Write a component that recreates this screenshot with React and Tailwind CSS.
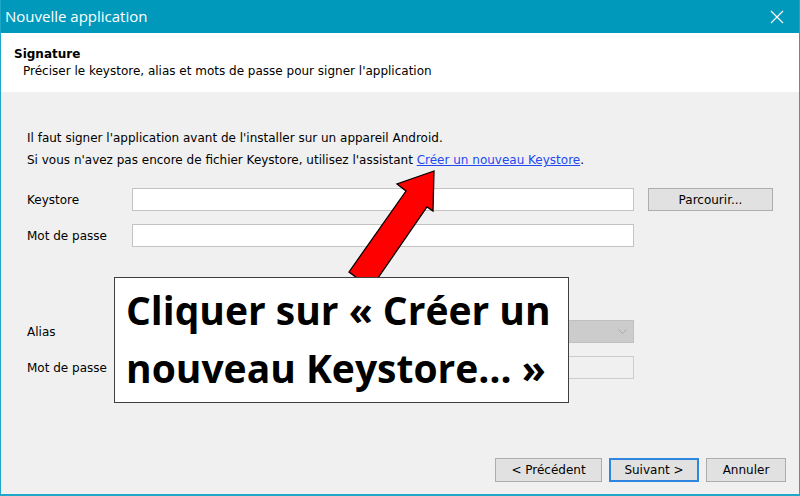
import React from "react";

const ui = { fontFamily: '"DejaVu Sans", Verdana, sans-serif' };

const Field = ({ label, children }) => (
  <div className="flex items-center h-[23px]">
    <span className="w-[105px] text-[12px] text-black">{label}</span>
    {children}
  </div>
);

const Button = ({ children, primary, width }) => (
  <button
    className={
      "h-[24px] bg-[#e1e1e1] text-[12px] text-black flex items-center justify-center " +
      (primary ? "border-2 border-[#2f86de]" : "border border-[#adadad]")
    }
    style={{ width }}
  >
    {children}
  </button>
);

const App = () => {
  return (
    <div
      className="relative w-[800px] h-[496px] flex flex-col border-x border-b-2 border-[#1ea7c8] bg-[#f0f0f0] overflow-hidden"
      style={ui}
    >
      {/* title bar */}
      <div className="h-[33px] -mx-px bg-[#0099bc] flex items-center justify-between pl-[5px] pr-[16px]">
        <span
          className="text-white text-[15px]"
          style={{ fontFamily: '"Open Sans", sans-serif' }}
        >
          Nouvelle application
        </span>
        <svg width="14" height="14" viewBox="0 0 14 14">
          <path d="M1 1 L13 13 M13 1 L1 13" stroke="#fff" strokeWidth="1.2" />
        </svg>
      </div>

      {/* header */}
      <div className="h-[59px] bg-white pt-[13px]">
        <div className="pl-[13px] text-[12px] font-bold text-black leading-[16px]">
          Signature
        </div>
        <div className="pl-[22px] text-[12px] text-black leading-[16px] mt-[1px]">
          Préciser le keystore, alias et mots de passe pour signer l'application
        </div>
      </div>

      {/* body */}
      <div className="flex-1 flex flex-col pl-[26px] pt-[35px] pb-[12px] pr-[13px]">
        <p className="text-[12px] leading-[22px] text-black">
          Il faut signer l'application avant de l'installer sur un appareil Android.
          <br />
          Si vous n'avez pas encore de fichier Keystore, utilisez l'assistant{" "}
          <span className="text-[#2448f0] underline">Créer un nouveau Keystore</span>.
        </p>

        <div className="mt-[17px] flex flex-col gap-[13px]">
          <Field label="Keystore">
            <div className="w-[502px] h-[23px] bg-white border border-[#c3c3c3]" />
            <div className="ml-[14px] w-[125px] h-[23px] bg-[#e1e1e1] border border-[#adadad] text-[12px] flex items-center justify-center">
              Parcourir...
            </div>
          </Field>
          <Field label="Mot de passe">
            <div className="w-[502px] h-[23px] bg-white border border-[#c3c3c3]" />
          </Field>
        </div>

        <div className="mt-[73px] flex flex-col gap-[13px]">
          <Field label="Alias">
            <div className="w-[502px] h-[23px] bg-[#cccccc] border border-[#c0c0c0] flex items-center justify-end pr-[6px]">
              <svg width="9" height="6" viewBox="0 0 9 6">
                <path d="M0.5 0.5 L4.5 4.5 L8.5 0.5" fill="none" stroke="#a8a8a8" strokeWidth="1" />
              </svg>
            </div>
          </Field>
          <Field label="Mot de passe">
            <div className="w-[502px] h-[23px] bg-[#f0f0f0] border border-[#cccccc]" />
          </Field>
        </div>

        <div className="mt-auto flex justify-end gap-[7px] pr-[0px]">
          <Button width={107}>&lt; Précédent</Button>
          <Button width={90} primary>Suivant &gt;</Button>
          <Button width={80}>Annuler</Button>
        </div>
      </div>

      {/* red arrow annotation */}
      <svg
        className="absolute left-0 top-0 pointer-events-none"
        width="800"
        height="496"
        viewBox="0 0 800 496"
      >
        <polygon
          points="433,171 396,184 405,191 348,272 370,288 426,207 432,211"
          fill="#ff0000"
          stroke="#000"
          strokeWidth="1.3"
          strokeLinejoin="miter"
        />
      </svg>

      {/* callout */}
      <div
        className="absolute left-[113px] top-[277px] w-[455px] h-[126px] bg-white border border-[#404040] pl-[11px] pt-[3px] text-black font-bold text-[39px] leading-[58px]"
        style={{ fontFamily: '"Open Sans", Lato, sans-serif' }}
      >
        Cliquer sur « Créer un
        <br />
        nouveau Keystore… »
      </div>
    </div>
  );
};

export default App;
